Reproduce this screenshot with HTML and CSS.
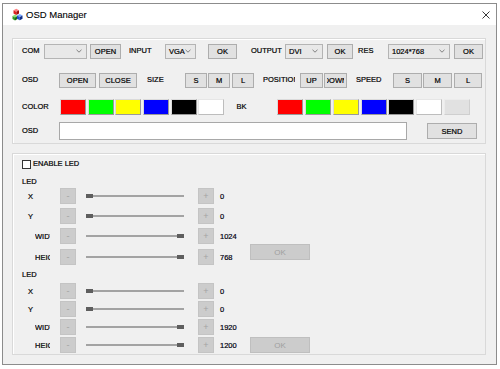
FILE: index.html
```html
<!DOCTYPE html>
<html>
<head>
<meta charset="utf-8">
<link rel="stylesheet" href="styles.css">
</head>
<body>
<div class="window">
  <div class="titlebar">
    <svg class="appicon" width="13" height="13" viewBox="0 0 13 13">
      <polygon points="2.5,8 5,6.6 7.5,8 5,9.4" fill="#8be07a"/>
      <polygon points="2.5,8 5,9.4 5,12.4 2.5,11" fill="#2e9a24"/>
      <polygon points="5,9.4 7.5,8 7.5,11 5,12.4" fill="#1c6a14"/>
      <polygon points="7,7.5 9.8,6 12.5,7.5 9.8,9" fill="#7aa8ff"/>
      <polygon points="7,7.5 9.8,9 9.8,12.2 7,10.7" fill="#2050d0"/>
      <polygon points="9.8,9 12.5,7.5 12.5,10.7 9.8,12.2" fill="#10308a"/>
      <polygon points="3.5,2.2 6.3,0.7 9,2.2 6.3,3.7" fill="#ff8080"/>
      <polygon points="3.5,2.2 6.3,3.7 6.3,7 3.5,5.5" fill="#e02020"/>
      <polygon points="6.3,3.7 9,2.2 9,5.5 6.3,7" fill="#a00c0c"/>
    </svg>
    <span class="title">OSD Manager</span>
    <svg class="close" width="8" height="8" viewBox="0 0 8 8">
      <path d="M0.5 0.5 L7.5 7.5 M7.5 0.5 L0.5 7.5" stroke="#222" stroke-width="0.9" fill="none"/>
    </svg>
  </div>
  <div class="client">
    <div class="group g1">
      <div class="row r1">
        <span class="lbl w22">COM</span>
        <span class="combo w43"><span class="ctext"></span><svg class="chev" width="6" height="4" viewBox="0 0 6 4"><path d="M0.5 0.8 L3 3.2 L5.5 0.8" stroke="#666" stroke-width="0.8" fill="none"/></svg></span>
        <span class="btn ml3 w31">OPEN</span>
        <span class="lbl ml8 w36">INPUT</span>
        <span class="combo w31"><span class="ctext">VGA</span><svg class="chev" width="6" height="4" viewBox="0 0 6 4"><path d="M0.5 0.8 L3 3.2 L5.5 0.8" stroke="#666" stroke-width="0.8" fill="none"/></svg></span>
        <span class="btn ml12 w29">OK</span>
        <span class="lbl ml14 w34">OUTPUT</span>
        <span class="combo w38"><span class="ctext">DVI</span><svg class="chev" width="6" height="4" viewBox="0 0 6 4"><path d="M0.5 0.8 L3 3.2 L5.5 0.8" stroke="#666" stroke-width="0.8" fill="none"/></svg></span>
        <span class="btn ml4 w26">OK</span>
        <span class="lbl ml5 w30">RES</span>
        <span class="combo w62"><span class="ctext">1024*768</span><svg class="chev" width="6" height="4" viewBox="0 0 6 4"><path d="M0.5 0.8 L3 3.2 L5.5 0.8" stroke="#666" stroke-width="0.8" fill="none"/></svg></span>
        <span class="btn ml4 w29">OK</span>
      </div>
      <div class="row r2">
        <span class="lbl w37">OSD</span>
        <span class="btn w37">OPEN</span>
        <span class="btn ml3 w38">CLOSE</span>
        <span class="lbl ml10 w38">SIZE</span>
        <span class="btn w22">S</span>
        <span class="btn ml1 w22">M</span>
        <span class="btn ml2 w22">L</span>
        <span class="lbl ml9 w32 clipl">POSITION</span>
        <span class="btn ml5 w23">UP</span>
        <span class="btn ml1 w23"><span class="clip">DOWN</span></span>
        <span class="lbl ml9 w37">SPEED</span>
        <span class="btn w29">S</span>
        <span class="btn ml1 w29">M</span>
        <span class="btn ml2 w28">L</span>
      </div>
      <div class="row r3">
        <span class="lbl w38">COLOR</span>
        <span class="swatches">
          <span class="sw red"></span><span class="sw green"></span><span class="sw yellow"></span><span class="sw blue"></span><span class="sw black"></span><span class="sw white"></span>
        </span>
        <span class="lbl ml12 w41">BK</span>
        <span class="swatches">
          <span class="sw red"></span><span class="sw green"></span><span class="sw yellow"></span><span class="sw blue"></span><span class="sw black"></span><span class="sw white"></span><span class="sw gray"></span>
        </span>
      </div>
      <div class="row r4">
        <span class="lbl w37">OSD</span>
        <span class="textbox"></span>
        <span class="btn ml20 w50 send">SEND</span>
      </div>
    </div>

    <div class="group g2">
      <div class="enable">
        <span class="checkbox"></span>
        <span class="lbl">ENABLE LED</span>
      </div>

      <div class="ledtitle t1">LED</div>
      <div class="ledblock b1">
        <div class="rows">
          <div class="ledrow">
            <span class="rlabel"><span class="rl-x">X</span></span>
            <span class="dbtn">-</span>
            <span class="slider"><span class="thumb"></span></span>
            <span class="dbtn plus">+</span>
            <span class="val">0</span>
          </div>
          <div class="ledrow">
            <span class="rlabel"><span class="rl-x">Y</span></span>
            <span class="dbtn">-</span>
            <span class="slider"><span class="thumb"></span></span>
            <span class="dbtn plus">+</span>
            <span class="val">0</span>
          </div>
          <div class="ledrow">
            <span class="rlabel"><span class="rl-w">WIDTH</span></span>
            <span class="dbtn">-</span>
            <span class="slider max"><span class="thumb"></span></span>
            <span class="dbtn plus">+</span>
            <span class="val">1024</span>
          </div>
          <div class="ledrow">
            <span class="rlabel"><span class="rl-w">HEIGHT</span></span>
            <span class="dbtn">-</span>
            <span class="slider max"><span class="thumb"></span></span>
            <span class="dbtn plus">+</span>
            <span class="val">768</span>
          </div>
        </div>
        <span class="okdis">OK</span>
      </div>

      <div class="ledtitle t2">LED</div>
      <div class="ledblock b2">
        <div class="rows">
          <div class="ledrow">
            <span class="rlabel"><span class="rl-x">X</span></span>
            <span class="dbtn">-</span>
            <span class="slider"><span class="thumb"></span></span>
            <span class="dbtn plus">+</span>
            <span class="val">0</span>
          </div>
          <div class="ledrow">
            <span class="rlabel"><span class="rl-x">Y</span></span>
            <span class="dbtn">-</span>
            <span class="slider"><span class="thumb"></span></span>
            <span class="dbtn plus">+</span>
            <span class="val">0</span>
          </div>
          <div class="ledrow">
            <span class="rlabel"><span class="rl-w">WIDTH</span></span>
            <span class="dbtn">-</span>
            <span class="slider max"><span class="thumb"></span></span>
            <span class="dbtn plus">+</span>
            <span class="val">1920</span>
          </div>
          <div class="ledrow">
            <span class="rlabel"><span class="rl-w">HEIGHT</span></span>
            <span class="dbtn">-</span>
            <span class="slider max"><span class="thumb"></span></span>
            <span class="dbtn plus">+</span>
            <span class="val">1200</span>
          </div>
        </div>
        <span class="okdis">OK</span>
      </div>
    </div>
  </div>
</div>
</body>
</html>
```

FILE: styles.css
```css
html, body {
  margin: 0;
  padding: 0;
  background: #ffffff;
}
body {
  font-family: "Liberation Sans", Arial, sans-serif;
  font-size: 7.5px;
  color: #000;
  -webkit-text-stroke: 0.2px #000;
}
.window {
  margin: 3px 0 0 2px;
  width: 495px;
  height: 362px;
  box-sizing: border-box;
  border: 1px solid #8c8c8c;
  display: flex;
  flex-direction: column;
  background: #f0f0f0;
}
.titlebar {
  height: 21px;
  flex: none;
  background: #ffffff;
  display: flex;
  align-items: center;
  padding-left: 7px;
}
.appicon { flex: none; }
.title {
  margin-left: 3px;
  font-size: 9.5px;
  color: #000;
  -webkit-text-stroke: 0.1px #000;
}
.close {
  margin-left: auto;
  margin-right: 6px;
}
.client {
  flex: 1;
  padding: 13px 0 0 9px;
}
.group {
  box-sizing: border-box;
  width: 474px;
  border: 1px solid #d9d9d9;
  box-shadow: inset 1px 1px 0 #ffffff;
}
.g1 { height: 106px; }
.g2 {
  height: 202px;
  margin-top: 9px;
  padding-left: 9px;
}
.g1 .row {
  display: flex;
  align-items: center;
  padding-left: 9px;
  height: 16px;
}
.r1 { margin-top: 4px; }
.r2 { margin-top: 13px; }
.r3 { margin-top: 11px; }
.r4 { margin-top: 7px; height: 18px !important; }

.lbl {
  flex: none;
  white-space: nowrap;
  line-height: 10px;
}
.clipl { overflow: hidden; }
.btn {
  flex: none;
  box-sizing: border-box;
  height: 15px;
  background: #e1e1e1;
  border: 1px solid #adadad;
  display: flex;
  align-items: center;
  justify-content: center;
  white-space: nowrap;
  overflow: hidden;
}
.send { height: 16px; }
.clip {
  display: flex;
  justify-content: center;
  width: 17px;
  overflow: hidden;
  white-space: nowrap;
}
.combo {
  flex: none;
  box-sizing: border-box;
  height: 15px;
  background: #e8e8e8;
  border: 1px solid #b4b4b4;
  display: flex;
  align-items: center;
  padding: 0 4px 0 3px;
}
.ctext { flex: 1; white-space: nowrap; }
.chev { flex: none; }

.w22 { width: 22px; }
.w23 { width: 23px; }
.w26 { width: 26px; }
.w28 { width: 28px; }
.w29 { width: 29px; }
.w30 { width: 30px; }
.w31 { width: 31px; }
.w32 { width: 32px; }
.w34 { width: 34px; }
.w36 { width: 36px; }
.w37 { width: 37px; }
.w38 { width: 38px; }
.w41 { width: 41px; }
.w43 { width: 43px; }
.w50 { width: 50px; }
.w62 { width: 62px; }
.ml1 { margin-left: 1px; }
.ml2 { margin-left: 2px; }
.ml3 { margin-left: 3px; }
.ml4 { margin-left: 4px; }
.ml5 { margin-left: 5px; }
.ml8 { margin-left: 8px; }
.ml9 { margin-left: 9px; }
.ml10 { margin-left: 10px; }
.ml12 { margin-left: 12px; }
.ml14 { margin-left: 14px; }
.ml20 { margin-left: 20px; }

.swatches {
  display: flex;
  gap: 1.7px;
  flex: none;
}
.sw {
  box-sizing: border-box;
  width: 26px;
  height: 16px;
  border: 1px solid;
  border-color: #dadada #9a9a9a #9a9a9a #dadada;
}
.red { background: #ff0000; }
.green { background: #00ff00; }
.yellow { background: #ffff00; }
.blue { background: #0000ff; }
.black { background: #000000; }
.white { background: #ffffff; border-color: #e6e6e6 #bdbdbd #bdbdbd #e6e6e6; }
.gray { background: #e1e1e1; border-color: #ececec #cfcfcf #cfcfcf #ececec; }

.textbox {
  flex: none;
  box-sizing: border-box;
  width: 348px;
  height: 18px;
  background: #ffffff;
  border: 1px solid #a8a8a8;
}

.enable {
  display: flex;
  align-items: center;
  height: 12px;
  margin-top: 4px;
}
.checkbox {
  box-sizing: border-box;
  width: 9px;
  height: 9px;
  border: 1px solid #333333;
  background: #ffffff;
  margin-right: 2px;
}
.ledtitle {
  height: 10px;
  line-height: 10px;
}
.t1 { margin-top: 7px; }
.t2 { margin-top: 5px; }

.ledblock {
  display: flex;
  align-items: flex-end;
}
.ledrow {
  display: flex;
  align-items: center;
  height: 16px;
}
.b1 .ledrow:nth-child(1) { margin-top: 1px; }
.b1 .ledrow:nth-child(2) { margin-top: 4px; }
.b1 .ledrow:nth-child(3) { margin-top: 4px; }
.b1 .ledrow:nth-child(4) { margin-top: 5px; }
.b2 .ledrow:nth-child(1) { margin-top: 3px; }
.b2 .ledrow:nth-child(2) { margin-top: 2px; }
.b2 .ledrow:nth-child(3) { margin-top: 2px; }
.b2 .ledrow:nth-child(4) { margin-top: 2px; }

.rlabel {
  flex: none;
  width: 38px;
  display: flex;
}
.rl-x { padding-left: 6px; }
.rl-w {
  margin-left: 13px;
  width: 15px;
  overflow: hidden;
  white-space: nowrap;
}
.dbtn {
  flex: none;
  box-sizing: border-box;
  width: 16px;
  height: 16px;
  background: #cccccc;
  border: 1px solid #c4c4c4;
  color: #a3a3a3;
  -webkit-text-stroke: 0;
  font-size: 9px;
  display: flex;
  align-items: center;
  justify-content: center;
}
.dbtn.plus { margin-left: 14px; }
.slider {
  flex: none;
  margin-left: 10px;
  width: 98px;
  height: 4px;
  display: flex;
  background: linear-gradient(#a3a3a3, #a3a3a3) center / 100% 2px no-repeat;
}
.slider.max { justify-content: flex-end; }
.thumb {
  width: 7px;
  height: 4px;
  background: #5e5e5e;
}
.val {
  flex: none;
  width: 20px;
  margin-left: 6px;
  color: #000022;
}
.okdis {
  box-sizing: border-box;
  width: 60px;
  height: 16px;
  margin-left: 10px;
  background: #cccccc;
  border: 1px solid #bfbfbf;
  color: #a0a0a0;
  -webkit-text-stroke: 0;
  font-size: 8px;
  display: flex;
  align-items: center;
  justify-content: center;
}
.b1 .okdis { margin-bottom: 5px; }
```
